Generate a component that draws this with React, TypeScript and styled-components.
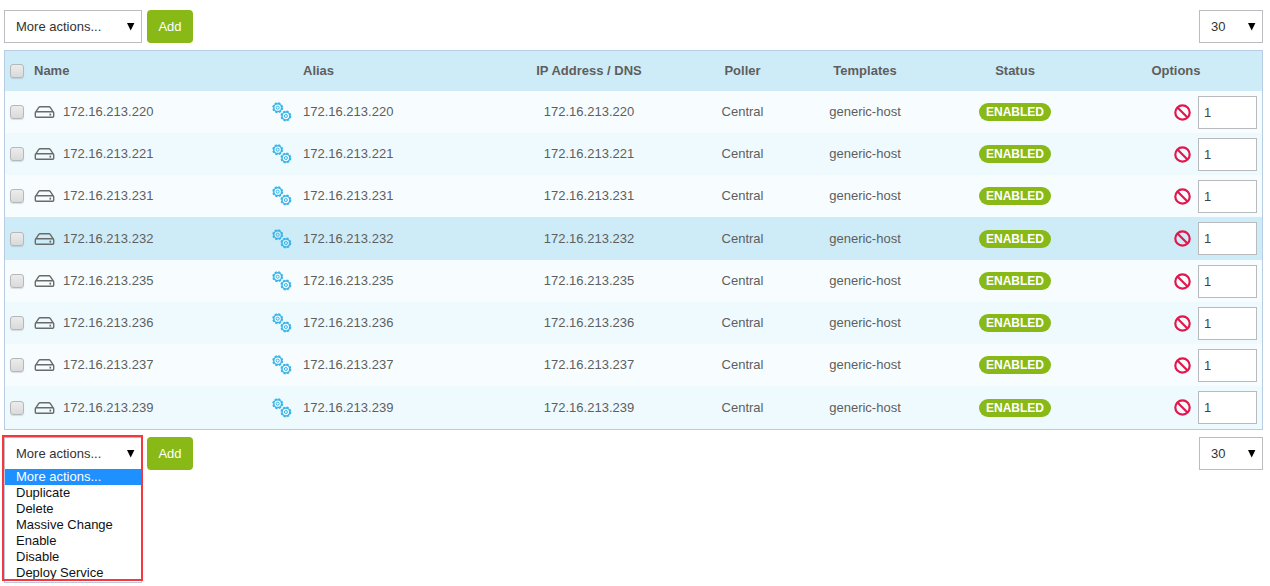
import React from "react";
import styled, { createGlobalStyle } from "styled-components";

const GlobalStyle = createGlobalStyle`
  *, *::before, *::after { box-sizing: border-box; }
  body {
    margin: 0;
    background: #fff;
    color: #5e5e5e;
    font: 13px/16px "Liberation Sans", Arial, sans-serif;
  }
`;

const Page = styled.main`
  min-height: 100vh;
  padding: 10px 7px 3px 4px;
`;

const Toolbar = styled.div`
  display: flex;
  align-items: flex-start;
  justify-content: space-between;
`;

const Actions = styled.div`
  display: flex;
  align-items: flex-start;
  gap: 5px;
`;

const SelectBox = styled.div<{ $width: number }>`
  position: relative;
  width: ${(p) => p.$width}px;
`;

const Select = styled.select`
  appearance: none;
  display: block;
  width: 100%;
  height: 33px;
  padding: 0 11px;
  border: 1px solid #bdbdc1;
  border-radius: 0;
  background: #fff;
  color: #333;
  font: inherit;
`;

const Arrow = styled.svg`
  position: absolute;
  top: 13px;
  right: 7px;
  width: 8px;
  height: 8px;
  pointer-events: none;
`;

const AddButton = styled.button`
  height: 33px;
  padding: 0 11px;
  min-width: 46px;
  border: 0;
  border-radius: 4px;
  background: #88b917;
  color: #fff;
  font: inherit;
`;

const Options = styled.ul`
  height: 114px;
  margin: -1px 0 0;
  position: relative;
  padding: 0;
  overflow: hidden;
  list-style: none;
  border: 1px solid #b5c9e2;
  border-top: 0;
  background: #fff;
  color: #111;
`;

const Option = styled.li<{ $active: boolean }>`
  padding: 0 11px;
  background: ${(p) => (p.$active ? "#1e90ff" : "transparent")};
  color: ${(p) => (p.$active ? "#fff" : "inherit")};
`;

const Highlight = styled.div`
  position: absolute;
  top: -2px;
  left: -2px;
  right: -1px;
  bottom: 2px;
  border: 2px solid #f5383d;
  pointer-events: none;
`;

const Table = styled.table`
  width: 100%;
  margin: 7px 0;
  table-layout: fixed;
  border-collapse: separate;
  border-spacing: 0;
  border: 1px solid #b8cde3;
`;

const HeadRow = styled.tr`
  height: 40px;
  background: #ceecf8;
`;

const Row = styled.tr<{ $selected: boolean }>`
  height: 42px;
  background: ${(p) => (p.$selected ? "#ceecf8" : "#f7fdff")};
  &:nth-child(even) {
    background: ${(p) => (p.$selected ? "#ceecf8" : "#effaff")};
  }
  &:nth-child(4n) {
    height: 43px;
  }
`;

const Head = styled.th<{ $align?: string; $indent?: number }>`
  padding: 0 0 0 ${(p) => p.$indent ?? 0}px;
  text-align: ${(p) => p.$align ?? "center"};
  vertical-align: middle;
`;

const Cell = styled.td<{ $align?: string; $indent?: number }>`
  padding: 0 0 0 ${(p) => p.$indent ?? 0}px;
  text-align: ${(p) => p.$align ?? "center"};
  vertical-align: middle;
`;

const Checkbox = styled.input`
  appearance: none;
  display: block;
  width: 14px;
  height: 14px;
  margin: 0;
  border: 1px solid #b4b8ba;
  border-radius: 3px;
  background: linear-gradient(#ececec, #dadada);
  box-shadow: 0 1px 1px rgba(0, 0, 0, 0.12);
`;

const IconText = styled.div<{ $gap: number }>`
  display: flex;
  align-items: center;
  gap: ${(p) => p.$gap}px;
`;

const Badge = styled.span`
  display: inline-block;
  padding: 1px 7px;
  border-radius: 9px;
  background: #88b917;
  color: #fff;
  font-size: 12px;
  font-weight: bold;
`;

const OptionTools = styled.div`
  display: flex;
  align-items: center;
  justify-content: flex-end;
  gap: 7px;
  padding-right: 5px;
`;

const IconButton = styled.button`
  display: flex;
  padding: 0;
  border: 0;
  background: none;
`;

const CountInput = styled.input`
  width: 59px;
  height: 33px;
  padding: 0 5px;
  border: 1px solid #b9babd;
  background: #fff;
  color: #444;
  font: inherit;
`;

const HostIcon = () => (
  <svg width="21" height="12" viewBox="0 0 21 12" fill="none" stroke="#6a6a6a" strokeWidth="1.4" aria-hidden="true">
    <path d="M1.8 5.8 4.8 1.5Q5.2 .8 6 .8h9q.8 0 1.2.7l3 4.3" />
    <rect x="1.3" y="5.8" width="18.4" height="5.4" rx="1" />
    <path d="M16.3 7.6v2" strokeWidth="1.6" />
  </svg>
);

const Gear = ({ x, y }: { x: number; y: number }) => (
  <g transform={`translate(${x} ${y})`} fill="none" stroke="#38b4e8">
    <circle r="4.8" strokeWidth="1.3" strokeDasharray="2.3 1.47" />
    <circle r="3.9" strokeWidth="1.5" />
    <circle r="1.5" strokeWidth="1" />
  </g>
);

const GearsIcon = () => (
  <svg width="20" height="20" viewBox="0 0 20 20" aria-hidden="true">
    <Gear x={5.7} y={5.7} />
    <Gear x={13.9} y={14} />
  </svg>
);

const BanIcon = () => (
  <svg width="17" height="17" viewBox="0 0 17 17" fill="none" stroke="#e3174b" strokeWidth="2.2" aria-hidden="true">
    <circle cx="8.5" cy="8.5" r="7.2" />
    <path d="m3.5 3.5 10 10" />
  </svg>
);

const ACTIONS = ["More actions...", "Duplicate", "Delete", "Massive Change", "Enable", "Disable", "Deploy Service"];
const HOSTS = [220, 221, 231, 232, 235, 236, 237, 239].map((n) => `172.16.213.${n}`);
const SELECTED_HOST = "172.16.213.232";
const COLUMNS = [29, 230, 219, 212, 95, 150, 150, 172];

const DownArrow = () => (
  <Arrow viewBox="0 0 8 8" aria-hidden="true">
    <path d="M0 0h7.4L3.7 7.4z" fill="#000" />
  </Arrow>
);

const ListToolbar = ({ open = false }: { open?: boolean }) => (
  <Toolbar>
    <Actions>
      <SelectBox $width={138}>
        <Select aria-label="More actions">
          {ACTIONS.map((a) => (
            <option key={a}>{a}</option>
          ))}
        </Select>
        <DownArrow />
        {open && (
          <>
            <Options role="listbox" aria-label="Actions">
              {ACTIONS.map((a, i) => (
                <Option key={a} role="option" aria-selected={i === 0} $active={i === 0}>
                  {a}
                </Option>
              ))}
            </Options>
            <Highlight />
          </>
        )}
      </SelectBox>
      <AddButton type="button">Add</AddButton>
    </Actions>
    <SelectBox $width={64}>
      <Select aria-label="Rows per page" defaultValue="30">
        <option>10</option>
        <option>30</option>
        <option>50</option>
      </Select>
      <DownArrow />
    </SelectBox>
  </Toolbar>
);

const HostRow = ({ host }: { host: string }) => (
  <Row $selected={host === SELECTED_HOST}>
    <Cell $indent={5}>
      <Checkbox type="checkbox" aria-label={`Select ${host}`} />
    </Cell>
    <Cell $align="left">
      <IconText $gap={8}>
        <HostIcon />
        {host}
      </IconText>
    </Cell>
    <Cell $align="left" $indent={8}>
      <IconText $gap={11}>
        <GearsIcon />
        {host}
      </IconText>
    </Cell>
    <Cell>{host}</Cell>
    <Cell>Central</Cell>
    <Cell>generic-host</Cell>
    <Cell>
      <Badge>ENABLED</Badge>
    </Cell>
    <Cell>
      <OptionTools>
        <IconButton type="button" aria-label={`Disable ${host}`}>
          <BanIcon />
        </IconButton>
        <CountInput type="text" defaultValue="1" aria-label={`Duplicates of ${host}`} />
      </OptionTools>
    </Cell>
  </Row>
);

export default function App() {
  return (
    <>
      <GlobalStyle />
      <Page>
        <ListToolbar />
        <Table>
          <colgroup>
            {COLUMNS.map((width, i) => (
              <col key={i} width={width} />
            ))}
          </colgroup>
          <thead>
            <HeadRow>
              <Head $indent={5}>
                <Checkbox type="checkbox" aria-label="Select all hosts" />
              </Head>
              <Head $align="left">Name</Head>
              <Head $align="left" $indent={39}>Alias</Head>
              <Head>IP Address / DNS</Head>
              <Head>Poller</Head>
              <Head>Templates</Head>
              <Head>Status</Head>
              <Head>Options</Head>
            </HeadRow>
          </thead>
          <tbody>
            {HOSTS.map((host) => (
              <HostRow key={host} host={host} />
            ))}
          </tbody>
        </Table>
        <ListToolbar open />
      </Page>
    </>
  );
}
